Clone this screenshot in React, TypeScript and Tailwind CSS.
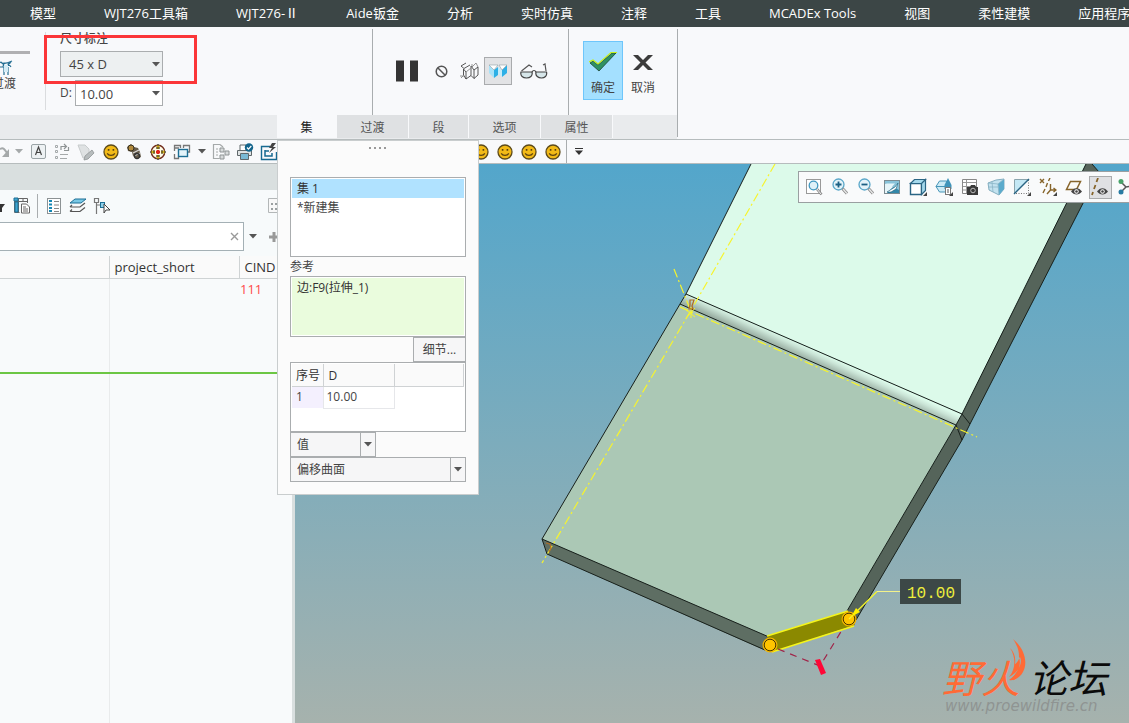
import React, { useState } from 'react'

const Ic = ({ children, w = 18, h = 18 }: { children: React.ReactNode; w?: number; h?: number }) => (
  <svg width={w} height={h} viewBox={`0 0 ${w} ${h}`} fill="none" className="shrink-0" aria-hidden="true">{children}</svg>
)

const Caret = ({ light = false }: { light?: boolean }) => (
  <Ic w={8} h={5}><path d="M0 0h8L4 4.5z" fill={light ? '#a5a9aa' : '#555'} /></Ic>
)

const Smile = () => (
  <Ic>
    <circle cx="9" cy="9" r="7" fill="#f2ba17" stroke="#5c4a1a" strokeWidth="1.3" />
    <path d="M5.8 6h1.6v1.8H5.8zM10.6 6h1.6v1.8h-1.6z" fill="#5c4210" />
    <path d="M5.2 10.4c1.4 2.6 6.2 2.6 7.6 0" stroke="#5c4210" strokeWidth="1.2" />
  </Ic>
)

const Cell = ({ label, children }: { label: string; children: React.ReactNode }) => (
  <button aria-label={label} className="flex h-6 w-6 shrink-0 items-center justify-center">{children}</button>
)

const menu: { key: string; label: React.ReactNode }[] = [
  { key: 'model', label: '模型' },
  { key: 'box', label: 'WJT276工具箱' },
  { key: 'two', label: <>WJT276-<span className="inline-block w-[13px] text-center font-['Noto_Sans_CJK_SC',sans-serif] leading-none">Ⅱ</span></> },
  { key: 'aide', label: 'Aide钣金' },
  { key: 'analysis', label: '分析' },
  { key: 'sim', label: '实时仿真' },
  { key: 'note', label: '注释' },
  { key: 'tools', label: '工具' },
  { key: 'mcadex', label: 'MCADEx Tools' },
  { key: 'view', label: '视图' },
  { key: 'flex', label: '柔性建模' },
  { key: 'apps', label: '应用程序' },
]

const tabs = [
  { name: '集', cls: 'w-[60px]' },
  { name: '过渡', cls: 'w-[72px]' },
  { name: '段', cls: 'w-[60px]' },
  { name: '选项', cls: 'w-[72px]' },
  { name: '属性', cls: 'w-[72px]' },
]

function Ribbon({ tab, setTab }: { tab: string; setTab: (t: string) => void }) {
  return (
    <section className="flex shrink-0 border-b border-[#b6bcbd] bg-[#f8f9fb]">
      <div className="flex flex-col">
        <div className="flex h-22 text-xs text-[#444]">
          <div className="flex w-[45px] shrink-0 flex-col overflow-hidden pt-6">
            <div className="h-[3px] w-[30px] bg-[#b0b0b2]" />
            <button className="mt-1 flex w-8 flex-col items-start">
              <Ic w={14} h={18}>
                <path d="M0 4c3 2 5 2 12-1M0 9h3l1-4h4l3 4M4 17V9M8 17V9M1 4l5 5 5-5" stroke="#256f93" strokeWidth="1.2" />
                <path d="M4 7h4v7H4z" fill="#d4ecf5" />
              </Ic>
              <span className="-ml-2 whitespace-nowrap">过渡</span>
            </button>
          </div>
          <div className="my-[5px] w-px bg-[#dadcde]" />
          <div className="w-[326px] pl-[14px] pt-[3px]">
            <div className="h-[21px] leading-[18px] font-medium">
              <label htmlFor="dimtype">尺寸标注</label>
            </div>
            <div className="relative w-[103px]">
              <select id="dimtype" className="h-[26px] w-full appearance-none border border-[#aaadaf] bg-[#edf0f1] pt-[2px] pl-2 text-[13px] outline-none">
                <option>45 x D</option>
              </select>
              <span className="pointer-events-none absolute top-[11px] right-[3px]"><Caret /></span>
            </div>
            <div className="mt-[3px] flex items-center">
              <label htmlFor="dval" className="w-[15px]">D:</label>
              <div className="relative w-[88px]">
                <input id="dval" defaultValue="10.00" className="h-[26px] w-full border border-[#aaadaf] bg-white pt-[2px] pl-1 text-[13px] outline-none" />
                <span className="pointer-events-none absolute top-[11px] right-[3px]"><Caret /></span>
              </div>
            </div>
          </div>
          <div className="mt-[2px] w-px bg-[#a9adaf]" />
          <div className="flex w-[195px] items-center pl-[22px]">
            <button aria-label="暂停"><Ic w={24} h={22}><path d="M1 .5h8v21H1zM15 .5h8v21h-8z" fill="#343434" /></Ic></button>
            <button aria-label="无预览" className="ml-4">
              <Ic w={13} h={13}><circle cx="6.500" cy="6.500" r="5.300" stroke="#555" strokeWidth="1.500" /><path d="m3 3 7 7" stroke="#555" strokeWidth="1.500" /></Ic>
            </button>
            <button aria-label="分离" className="ml-3">
              <Ic w={19} h={18}>
                <path d="m1 4 5-3M1 4l3 2.500L10 3M6 17v-7L3.500 7v6L6 17l5-3.500V4M11 13.500l3 3V8l-3-4M14 8l4-3v8l-4 3.500" stroke="#444" strokeWidth=".9" />
                <path d="M0 14h4m2-4 5-4m0 0 5-5m0 0 2 4M12 2v3M1 16l3-3" stroke="#888" strokeWidth=".9" />
              </Ic>
            </button>
            <button aria-label="连接" className="ml-[5px] flex h-7 w-7 items-center justify-center border border-[#a9abad] bg-[#e2e3e5]">
              <Ic w={20} h={16}>
                <path d="m1 2 5 5v8l-5-5z" fill="#a9e2f8" /><path d="m6 7 4-3v8l-4 3z" fill="#2db0e6" />
                <path d="m10 4 4 3v7l-4-3z" fill="#c5ecfa" /><path d="m14 7 5-5v8l-5 4z" fill="#2db0e6" />
                <path d="M1 2h9L6 7zM11 2h8l-5 5z" fill="#fff" stroke="#7a8d95" strokeWidth=".5" />
              </Ic>
            </button>
            <button aria-label="预览" className="ml-2">
              <Ic w={28} h={16}>
                <path d="M1.500 8 9 2l3 2M26 8l-1-7-2 1" stroke="#555" strokeWidth="1.200" />
                <path d="M1 9h11c1 4-2 6-5.500 6S0 13 1 9zM16 9h10.500c1 4-2 6-5 6S15 13 16 9z" fill="#d6e6e9" stroke="#444" strokeWidth="1.200" />
                <path d="M12 9c1-2 3-2 4 0" stroke="#444" strokeWidth="1.200" />
              </Ic>
            </button>
          </div>
          <div className="mt-[2px] w-px bg-[#a9adaf]" />
          <div className="flex w-[108px] pt-[14px] pl-[14px]">
            <button className="flex h-[59px] w-10 flex-col items-center border border-[#6ec6fb] bg-[#a4e0ff] pt-[9px]">
              <Ic w={28} h={22}>
                <path d="m1 12 3-2 5 4L23 2h4L10 20z" fill="#2f9163" stroke="#1b4535" strokeWidth=".8" />
                <path d="m0 11 4-2 5 4L22 1.500h6" stroke="#c8f016" strokeWidth="1.200" />
              </Ic>
              <span className="mt-[6px] leading-[18px]">确定</span>
            </button>
            <button className="flex h-[59px] w-10 flex-col items-center pt-[10px]">
              <Ic w={20} h={22}><path d="M0 4h5l5 5 5-5h5l-7.500 7.500L20 19h-5l-5-5-5 5H0l7.500-7.500z" fill="#3c3c3c" /></Ic>
              <span className="mt-[6px] leading-[18px]">取消</span>
            </button>
          </div>
        </div>
        <div className="flex h-6 bg-[#e9ebed] pb-px">
          <div className="w-[277px]" />
          {tabs.map(t => (
            <button key={t.name} onClick={() => setTab(t.name)}
              className={`${t.cls} border-r border-[#f8f9fb] pt-[2px] text-xs ${tab === t.name ? 'bg-[#f8f9fb] text-[#222]' : 'bg-[#dfe1e3] text-[#555]'}`}>
              {t.name}
            </button>
          ))}
        </div>
      </div>
      <div className="mt-[2px] mb-[2px] w-px bg-[#a9adaf]" />
    </section>
  )
}

function QuickBar() {
  return (
    <div className="flex h-6 shrink-0 items-center overflow-hidden border-b border-[#b6bcbd] bg-[#f8f9fb]">
      <button aria-label="重做" className="flex w-[26px] shrink-0 items-center gap-[3px]">
        <Ic w={12} h={14}><path d="M0 4c4-2 5 1 7 4" stroke="#a5a9aa" strokeWidth="2" /><path d="M9 4v8H2z" fill="#a5a9aa" /></Ic>
        <Caret light />
      </button>
      <Cell label="注解"><Ic><rect x="2.500" y="1.500" width="14" height="14" rx="1.500" fill="#edf1f3" stroke="#9aa3a6" /><path d="m6.500 12 3-8 3 8M7.500 9.500h4" stroke="#444" strokeWidth="1.200" /></Ic></Cell>
      <Cell label="重新排列"><Ic><path d="M2.500 2.500h2v2h-2zM2.500 7.500h2v2h-2zM2.500 13.500h2v2h-2zM7 11.500h8M7 15.500h7" stroke="#a5a9aa" /><path d="M8 7V3.500h5M11 1l2.500 2.500L11 6M15.500 4v3.500H11" stroke="#8f9495" strokeWidth="1.200" /></Ic></Cell>
      <Cell label="清理"><Ic><path d="M1 2h7l4 4v9H6z" fill="#dfe2e3" stroke="#c8cccd" /><path d="m8 13 7-6 2 3-6 6-4 1z" fill="#b7bcbd" stroke="#909697" strokeWidth=".8" /></Ic></Cell>
      <Cell label="表情"><span className="pl-[2px]"><Smile /></span></Cell>
      <Cell label="扳手"><Ic><path d="M2 4 6 1l3 3 4 1 2 4 1 5-4 2-4-3-1-4-4-1z" fill="#665c4b" /><circle cx="6" cy="5" r="3" fill="#b28a3c" stroke="#37301f" /><path d="m8 10 6-3m-5 6 6-3" stroke="#d7d7d7" strokeWidth="1.300" /><circle cx="12" cy="13" r="2.500" stroke="#333" strokeWidth="1.300" /></Ic></Cell>
      <Cell label="定位"><Ic><circle cx="9" cy="9" r="6.700" fill="#fffce6" stroke="#6f2a1b" strokeWidth="1.400" /><path d="M9 2v4M9 12v4M2 9h4M12 9h4" stroke="#d7b317" strokeWidth="2.500" /><path d="M9 1v2M9 15v2M1 9h2M15 9h2M7 5h4M7 13h4M5 7v4M13 7v4" stroke="#222" /><path d="M7 9h4M9 7v4" stroke="#e3231b" strokeWidth="2.500" /></Ic></Cell>
      <Cell label="窗口"><Ic><path d="M1.500 8V2.500h6V5M1 5h5M10.500 5V2.500h6V9h-2M1.500 11v4.500h4V14" stroke="#777" strokeWidth="1.300" /><rect x="5.500" y="6.500" width="9" height="7" fill="#e4f4fa" stroke="#1d6f95" strokeWidth="1.400" /></Ic></Cell>
      <button aria-label="窗口列表" className="flex w-[15px] shrink-0 justify-center"><Caret /></button>
      <Cell label="模型设置"><Ic><path d="M8 1.500H1.500v14h6M8 1.500l3 2.500M4 6h2M4 9h2M4 12h2" stroke="#a5a9aa" strokeWidth="1.200" /><path d="M8 5h4v4H8zM13 8h4v4h-4zM8 12h4v4H8z" fill="#d7dadb" stroke="#8f9495" /></Ic></Cell>
      <Cell label="打印"><Ic><path d="M4 7V2h6v5" fill="#fff" stroke="#60686b" /><path d="M1.500 7.500h14v5h-14z" fill="#dfe3e4" stroke="#60686b" /><path d="M4.500 10.500h8v6h-8z" fill="#7ab9d4" stroke="#60686b" /><circle cx="13" cy="4.500" r="4.200" fill="#13648b" /><path d="m11 4.500 1.500 1.700L15.300 3" stroke="#fff" strokeWidth="1.200" /></Ic></Cell>
      <Cell label="更新"><Ic><path d="M10 3.500H1.500v13h15V9" stroke="#176a91" strokeWidth="1.400" /><path d="M5 7v6h7v-3M5 8h4" stroke="#176a91" strokeWidth="1.500" /><path d="M16 0h-4l-3 5h3l-3 5 7-6h-3z" fill="#444" /></Ic></Cell>
      <div className="w-[188px] shrink-0" />
      <Cell label="表情一"><Smile /></Cell>
      <Cell label="表情二"><Smile /></Cell>
      <Cell label="表情三"><Smile /></Cell>
      <Cell label="表情四"><Smile /></Cell>
      <div className="ml-px h-full w-px shrink-0 bg-[#a9adaf]" />
      <Cell label="自定义"><Ic w={8} h={7}><path d="M0 .5h8" stroke="#333" /><path d="M0 2.500h8L4 7z" fill="#333" /></Ic></Cell>
    </div>
  )
}

function TreePanel() {
  return (
    <aside className="flex w-[295px] shrink-0 flex-col border-r-[3px] border-[#d9dfdf] bg-[#f7fafb]">
      <div className="h-[26px] shrink-0 bg-[#d9dfdf]" />
      <div className="flex h-8 shrink-0 items-center">
        <Ic w={10} h={14}><path d="M0 5h5L2 9v4H0z" fill="#333" /></Ic>
        <button aria-label="树列" className="ml-[3px]"><Ic><path d="M1.500 1.500h13V6M1.500 1.500v14h5M5.500 1v15M1 4.500h13M10 1v4" stroke="#666" /><path d="M2 5h3v10H2zM1 1h4v3H1z" fill="#3fa5cf" stroke="#1d6f95" /><path d="M8.500 7h5l3 3v6h-8z" fill="#fff" stroke="#666" /><path d="M10 10h3m-3 2h5m-5 2h5" stroke="#666" /></Ic></button>
        <div className="ml-[6px] h-6 w-px bg-[#a9adaf]" />
        <button aria-label="显示" className="ml-[7px]"><Ic><rect x="2.500" y="1.500" width="13" height="15" fill="#fff" stroke="#8c9294" /><path d="M4 4h3M4 7.500h3M4 11h3M4 14h3" stroke="#1788b5" strokeWidth="2" /><path d="M9 4.500h5M9 8h5M9 11.500h5M9 14.500h5" stroke="#888" /></Ic></button>
        <button aria-label="层" className="ml-[6px]"><Ic><path d="M6 2h11l-5 4H1z" fill="#78c8e5" stroke="#1d6f95" /><path d="M1 10h10l5-4M1 10l2-2M1 14.500h10l5-4M1 14.500l2-2" stroke="#555" strokeWidth="1.200" /></Ic></button>
        <button aria-label="选择" className="ml-[6px]"><Ic><path d="M1.500 1.500h4v4h-4zM3.500 6v11M4 8h3" stroke="#777" strokeWidth="1.200" /><rect x="7.500" y="5.500" width="4" height="5" fill="#8ed0ea" stroke="#1d6f95" /><path d="m11 7 6 6h-4l-2 3z" fill="#fff" stroke="#444" /></Ic></button>
        <span className="ml-auto pr-[7px]"><Ic><path d="M1.500 1.500h14v14h-14z" fill="#f8f8f8" stroke="#b3b7b8" /><path d="M4 7h2M4 12h2M8 7h5M8 12h5" stroke="#9a9fa0" strokeWidth="2" /></Ic></span>
      </div>
      <div className="flex h-[29px] shrink-0 items-center">
        <div className="relative w-[244px]">
          <input aria-label="搜索" className="h-[29px] w-full border border-l-0 border-[#a4b0b5] bg-white px-2 text-xs outline-none" />
          <button aria-label="清除" className="absolute top-[10px] right-[5px]"><Ic w={9} h={9}><path d="m1 1 7 7m0-7L1 8" stroke="#999" strokeWidth="1.400" /></Ic></button>
        </div>
        <button aria-label="搜索选项" className="ml-[5px]"><Caret /></button>
        <button aria-label="添加" className="ml-3"><Ic w={10} h={10}><path d="M5 0v10M0 5h10" stroke="#999" strokeWidth="3" /></Ic></button>
      </div>
      <div className="mt-[5px] flex grow flex-col overflow-hidden bg-[#f8fafb]">
        <table className="h-full w-full table-fixed border-collapse text-[13px] text-[#333]">
          <colgroup><col className="w-[109px]" /><col className="w-[130px]" /><col /></colgroup>
          <thead>
            <tr className="h-[22px] border-b border-[#cfd3d4] bg-[#fafafa] text-left">
              <th className="border-r border-[#cfd3d4]" aria-label="名称" />
              <th className="border-r border-[#cfd3d4] pt-[2px] pl-[5px] font-normal">project_short</th>
              <th className="pt-[2px] pl-[5px] font-normal">CIND</th>
            </tr>
          </thead>
          <tbody>
            <tr className="h-[22px]">
              <td className="border-r border-[#e9ebec]" /><td />
              <td className="pl-px text-[#ff4a4a]">111</td>
            </tr>
            <tr className="h-[73px] border-b-2 border-[#6cc644]"><td className="border-r border-r-[#e9ebec]" /><td /><td /></tr>
            <tr><td className="border-r border-[#e9ebec]" /><td /><td /></tr>
          </tbody>
        </table>
      </div>
    </aside>
  )
}

const Mag = ({ children }: { children?: React.ReactNode }) => (
  <Ic>
    <circle cx="7.500" cy="6.500" r="5.500" fill="#e4f3f9" stroke="#5aa7c9" strokeWidth="1.300" />
    <path d="m11.500 10.500 4.500 5" stroke="#888" strokeWidth="3" /><path d="m12 11 4 4.500" stroke="#e7e7e7" strokeWidth="1.400" />
    {children}
  </Ic>
)
const Tick = () => <path d="M18 14v4h-4z" fill="#444" />
const Eye = () => (
  <><path d="M6 13.500c3-4.500 8-4.500 11 0-3 4-8 4-11 0z" fill="#444" /><circle cx="11.500" cy="13.500" r="2.200" fill="#fff" /><circle cx="11.500" cy="13.500" r="1.300" fill="#444" /></>
)

const viewTools: { label: string; on?: boolean; icon: React.ReactNode }[] = [
  { label: '重新调整', icon: <Ic><rect x="1.500" y="1.500" width="14" height="14" fill="#fff" stroke="#999" /><circle cx="8.500" cy="7.500" r="4.300" fill="#dff1f8" stroke="#3f97c0" strokeWidth="1.300" /><path d="m12 11 4.500 5.500" stroke="#888" strokeWidth="2.600" /><path d="m12 11 4 5" stroke="#eee" /></Ic> },
  { label: '放大', icon: <Mag><path d="M4.500 6.500h6m-3-3v6" stroke="#1b5f83" strokeWidth="1.800" /></Mag> },
  { label: '缩小', icon: <Mag><path d="M4.500 6.500h6" stroke="#1b5f83" strokeWidth="1.800" /></Mag> },
  { label: '重画', icon: <Ic><rect x="1.500" y="2.500" width="15" height="13" fill="#3387a9" stroke="#7c8b91" /><path d="M2 6h11L4 15H2z" fill="#e6f5f9" /><path d="M2 5V3h14v9z" fill="#88c3d9" /><path d="M2 5.500h10L4 14H2z" fill="#e6f5f9" /><path d="m4 14 8-5 3-4-2 6-5 3z" fill="#fff" stroke="#1c5f78" strokeWidth=".6" /></Ic> },
  { label: '显示样式', icon: <Ic><path d="M1.500 5.500h11v11h-11z" fill="#fff" stroke="#2a6584" strokeWidth="1.400" /><path d="m1.500 5.500 4-4h11l-4 4zM12.500 5.500l4-4v11l-4 4z" fill="#a5d9ec" stroke="#2a6584" strokeWidth="1.200" /><Tick /></Ic> },
  { label: '已命名视图', icon: <Ic><path d="M1 8.500 4.500 3h7l3 5.500-3 5.500h-7z" fill="#cdebf6" stroke="#4795b8" /><path d="M1 8.500h11" stroke="#4795b8" /><path d="m13 0 3.500 7v4h-7V7z" fill="#3f94ba" /><rect x="10.500" y="9.500" width="5" height="7" fill="#fff" stroke="#777" /><path d="M12 12h2m-2 2h2" stroke="#555" /><Tick /></Ic> },
  { label: '视图管理器', icon: <Ic><path d="M1.500 1.500h14v14h-14z" fill="#fff" stroke="#888" /><path d="M2 4.500h13M2 8.500h13M2 12h13M5.500 2v13" stroke="#999" /><path d="M6 9h3l1-2h4l1 2h2v8H6z" fill="#3a3a3a" /><circle cx="12" cy="12.500" r="2.300" stroke="#bbb" /></Ic> },
  { label: '外观', icon: <Ic><path d="m1 5 8-3 8-1v10l-5 6-10-5z" fill="#c3e2ef" stroke="#6d9db1" strokeWidth=".8" /><path d="m11 6 6-5v10l-5 6z" fill="#5cabcc" /><path d="m1 5 10 1 6-5M11 6l1 11M5 4l1 10M1 9h10" stroke="#8ab5c7" strokeWidth=".8" /></Ic> },
  { label: '截面', icon: <Ic><path d="M1.500 1.500h14L1.500 15.500z" fill="#c4e8f5" stroke="#8aa4ad" /><path d="M15.500 2v13.500H2" stroke="#777" strokeDasharray="1 1.500" /><path d="M16 1 1 16" stroke="#2a6584" strokeWidth="1.400" /><Tick /></Ic> },
  { label: '基准显示', icon: <Ic><path d="m1 1 4 4m0-4L1 5M11 0 9.500 3M8.500 5 7 9M6 11l-2 4M11.500 6v6h5m-2-2 2.500 2-2.500 2M11.500 12 8 16" stroke="#86642a" strokeWidth="1.400" /><Tick /></Ic> },
  { label: '平面显示', icon: <Ic><path d="M5.500 3.500h10l-4 8h-10z" fill="#fbfaf6" stroke="#86642a" strokeWidth="1.500" /><Eye /></Ic> },
  { label: '轴显示', on: true, icon: <Ic><path d="M7 0 5.500 4M4.500 7 3 11M2 14l-1 3" stroke="#86642a" strokeWidth="1.800" /><Eye /></Ic> },
  { label: '旋转中心', icon: <Ic><path d="M4 4 9 9l7-1M9 9l-5 5" stroke="#555" strokeWidth="1.500" /><circle cx="4" cy="3.500" r="2.500" fill="#48a36a" /><circle cx="4" cy="14" r="2.500" fill="#287ba2" /></Ic> },
]

function Viewport() {
  return (
    <main className="relative grow overflow-hidden bg-linear-to-b/srgb from-[#53a6cb] to-[#a6b2ad]">
      <svg className="absolute inset-0 h-full w-full" viewBox="295 164 834 559" preserveAspectRatio="xMinYMin slice" fill="none" aria-label="模型">
        <defs>
          <linearGradient id="bend" gradientUnits="userSpaceOnUse" x1="826" y1="355" x2="821" y2="366">
            <stop offset="0" stopColor="#dcfaea" /><stop offset=".35" stopColor="#cbe5d7" /><stop offset="1" stopColor="#9bb0a4" />
          </linearGradient>
        </defs>
        <path d="M751 164H1086L962 414 686 294z" fill="#dcfaea" />
        <path d="M1086 164h6l7 8L970 424l-8 16L856 620l-9-9L956 425l6-11z" fill="#55645a" />
        <path d="m686 294 276 120-6 11-276-121z" fill="url(#bend)" />
        <path d="M680 304 956 425 847 611 769 637 542 539z" fill="#abc8b5" />
        <path d="m542 539 227 98-5 13-217-96z" fill="#5e6e63" />
        <g stroke="#18201b" strokeWidth="1">
          <path d="m751 164-65 130-6 10L542 539l5 15 218 96M542 539l227 98M686 294l276 120 8 10M680 304l276 121 6 15M1086 164 962 414l-6 11-109 186M1092 164l7 8-129 252-8 16-106 180" />
        </g>
        <g stroke="#f7f42c" strokeWidth="1.200" strokeDasharray="9 3 2 3">
          <path d="m775 164-85 148L542 563M674 269l18 45M680 307l297 130" />
        </g>
        <path d="m685 309 10 8m0-9-8 9m4-10v11" stroke="#f7f42c" strokeWidth="1" />
        <path d="M690 300h4l-1 3-1 3 1 3h-4l1-4zM546 543l4 1 1 4-2 4" stroke="#b06c24" strokeWidth="1.200" />
        <path d="m767 636 81-25 7 14-82 27z" fill="#8b8900" />
        <path d="m767 636 81-25M772 652l82-26" stroke="#f5f51b" strokeWidth="1.500" />
        <path d="m778 649 42 17 22-36" stroke="#a02348" strokeWidth="1.200" strokeDasharray="7 6" />
        <path d="m815 660 5-1 6 14-5 2z" fill="#ff0837" />
        <g fill="#ffc400" stroke="#f0b400" strokeWidth="2">
          <circle cx="770" cy="645" r="6.500" /><circle cx="849" cy="619" r="6.500" />
        </g>
        <g stroke="#473700" strokeWidth="1"><circle cx="770" cy="645" r="5.800" /><circle cx="849" cy="619" r="5.800" /></g>
        <path d="m849 619 28-27.500" stroke="#f5f52a" strokeWidth="1.300" />
        <path d="M877 591.500h23" stroke="#f2f28a" />
        <path d="m851 617 5-9 4 4z" fill="#fff200" />
        <rect x="900" y="579" width="61" height="25" fill="#3c4847" />
        <text x="907" y="598" fill="#eeee3c" fontSize="16" fontFamily="Liberation Mono, monospace">10.00</text>
        <g fontFamily="Noto Sans CJK SC, sans-serif" fontSize="39" fontStyle="italic">
          <text x="942" y="693" fill="#ff6a36">野火</text>
          <text x="1029" y="693" fill="#0b0b0b">论坛</text>
        </g>
        <path d="M1013 639c12 10 15 24 10 33-4 7-10 9-14 8 8-6 13-14 10-23 0-7-2-12-6-18zM1010 648c6 9 6 21-1 29 9-4 14-14 11-20-2 4-3 6-5 7 1-7-1-12-5-16z" fill="#ff6a36" />
        <text x="945" y="711" fill="#8f9492" fontSize="15" fontStyle="italic" fontFamily="DejaVu Sans, sans-serif">www.proewildfire.cn</text>
      </svg>
      <div role="toolbar" aria-label="视图工具" className="absolute top-[7px] right-0 flex h-8 w-[331px] items-center overflow-hidden border border-r-0 border-[#9a9fa1] bg-[#f9fafb] pl-[2px]">
        {viewTools.map(t => (
          <button key={t.label} aria-label={t.label} className="flex w-[26px] shrink-0 items-center justify-center">
            <span className={t.on ? 'flex h-[23px] w-[23px] items-center justify-center border border-[#a9abad] bg-[#dfe0e3]' : 'flex'}>{t.icon}</span>
          </button>
        ))}
      </div>
    </main>
  )
}

function Picker({ id, label, cls, value }: { id: string; label: string; cls: string; value: string }) {
  return (
    <div className={`relative ${cls}`}>
      <select id={id} aria-label={label} className="h-[25px] w-full appearance-none border border-[#aaadaf] bg-[#f6f6f7] pl-[6px] text-xs outline-none">
        <option>{value}</option>
      </select>
      <span className="pointer-events-none absolute inset-y-0 right-0 flex w-4 items-center justify-center border-l border-[#aaadaf] pr-px"><Caret /></span>
    </div>
  )
}

function SetsPanel() {
  return (
    <div className="absolute top-[140px] left-[277px] w-[202px] border border-[#c9cdce] bg-[#fbfbfb] px-3 pb-3 text-xs text-[#444]">
      <div className="flex h-9 justify-center pt-[6px]">
        <Ic w={18} h={2}><path d="M0 1h18" stroke="#999" strokeWidth="2" strokeDasharray="2 3" /></Ic>
      </div>
      <ul className="h-20 border border-[#aaadaf] bg-white p-px leading-[19px]">
        <li className="bg-[#b0e2ff] pl-[5px] text-[#333]">集 1</li>
        <li className="pl-[5px]">*新建集</li>
      </ul>
      <div className="h-[19px] leading-[19px]">参考</div>
      <ul className="h-[61px] border border-[#aaadaf] bg-white p-px leading-[20px]">
        <li className="h-full bg-[#eafcdd] pl-[5px] text-[#333]">边:F9(拉伸_1)</li>
      </ul>
      <button className="ml-auto block h-[25px] w-[53px] border border-[#aaadaf] bg-[#f6f6f7]">细节...</button>
      <div className="h-[70px] border border-[#aaadaf] bg-white p-px">
        <table className="w-full table-fixed border-collapse text-left">
          <colgroup><col className="w-[31px]" /><col className="w-[71px]" /><col /></colgroup>
          <thead>
            <tr className="h-[22px] bg-[#fafafa] text-[#333]">
              <th className="border-r border-b border-[#cfd2d4] pt-[3px] pl-1 leading-[18px] font-normal whitespace-nowrap">序号</th>
              <th className="border-r border-b border-[#cfd2d4] pt-[3px] pl-[5px] leading-[18px] font-normal">D</th>
              <th className="border-r border-b border-[#cfd2d4]" aria-label="参考" />
            </tr>
          </thead>
          <tbody>
            <tr className="h-[22px]">
              <td className="bg-[#f4f0fe] pl-1">1</td>
              <td className="border border-t-0 border-[#e6e7ea] pl-[3px]">10.00</td>
              <td />
            </tr>
          </tbody>
        </table>
      </div>
      <Picker id="kind" label="值类型" cls="w-[86px]" value="值" />
      <Picker id="surface" label="曲面类型" cls="w-full" value="偏移曲面" />
    </div>
  )
}

export default function App() {
  const [tab, setTab] = useState('集')
  return (
    <div className="relative flex min-h-screen flex-col overflow-hidden bg-[#f8f9fb] font-['Open_Sans','Noto_Sans_CJK_SC',sans-serif]">
      <nav className="flex h-[27px] shrink-0 items-center gap-12 overflow-hidden bg-[#3c4646] pl-[30px] text-[13px] text-white">
        {menu.map(m => <a key={m.key} href="#" className="shrink-0 whitespace-nowrap">{m.label}</a>)}
      </nav>
      <Ribbon tab={tab} setTab={setTab} />
      <QuickBar />
      <div className="flex grow">
        <TreePanel />
        <Viewport />
      </div>
      {tab === '集' && <SetsPanel />}
      <div className="pointer-events-none absolute top-[35px] left-[44px] h-[49px] w-[153px] border-3 border-[#fb3638]" />
    </div>
  )
}
